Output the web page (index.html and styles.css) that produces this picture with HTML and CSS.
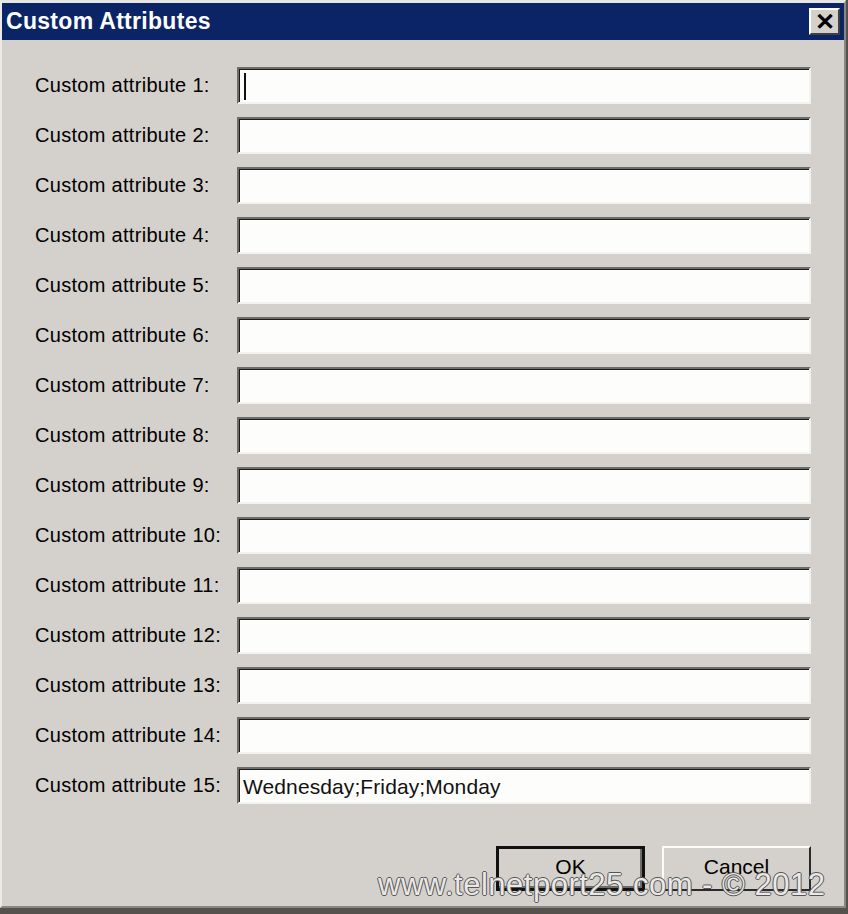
FILE: index.html
```html
<!DOCTYPE HTML>
<html>
<head>
<meta charset="utf-8" />
<title>Custom Attributes</title>
<link rel="stylesheet" href="styles.css">
</head>
<body>
<div class="window">
	<div class="titlebar">
		<span class="title">Custom Attributes</span>
		<span class="close">&#x2715;</span>
	</div>
	<div class="form">
		<label>Custom attribute 1:</label><div class="field"><span class="caret"></span></div>
		<label>Custom attribute 2:</label><div class="field"></div>
		<label>Custom attribute 3:</label><div class="field"></div>
		<label>Custom attribute 4:</label><div class="field"></div>
		<label>Custom attribute 5:</label><div class="field"></div>
		<label>Custom attribute 6:</label><div class="field"></div>
		<label>Custom attribute 7:</label><div class="field"></div>
		<label>Custom attribute 8:</label><div class="field"></div>
		<label>Custom attribute 9:</label><div class="field"></div>
		<label>Custom attribute 10:</label><div class="field"></div>
		<label>Custom attribute 11:</label><div class="field"></div>
		<label>Custom attribute 12:</label><div class="field"></div>
		<label>Custom attribute 13:</label><div class="field"></div>
		<label>Custom attribute 14:</label><div class="field"></div>
		<label>Custom attribute 15:</label><div class="field">Wednesday;Friday;Monday</div>
	</div>
	<div class="buttons">
		<div class="btn default">OK</div>
		<div class="btn">Cancel</div>
	</div>
	<div class="watermark">www.telnetport25.com - &copy; 2012</div>
</div>
</body>
</html>
```

FILE: styles.css
```css
html,body{margin:0;padding:0;}
body{
	width:848px;
	height:914px;
	overflow:hidden;
	background:#55524e;
	font-family:"Liberation Sans",Arial,sans-serif;
}
.window{
	position:relative;
	box-sizing:border-box;
	width:846px;
	height:908px;
	background:#d4d1cc;
	border-top:3px solid #e8e6e2;
	border-left:2px solid #eceae6;
	border-right:2px solid #8a8782;
	border-bottom:2px solid #8a8782;
}
.titlebar{
	height:37px;
	background:#0b2466;
	display:flex;
	align-items:center;
	justify-content:space-between;
	padding:0 4px 0 4px;
}
.title{
	color:#fff;
	font-weight:bold;
	font-size:23px;
	letter-spacing:0.3px;
}
.close{
	box-sizing:border-box;
	width:31px;
	height:27px;
	background:#d4d1cc;
	border-top:2px solid #fff;
	border-left:2px solid #fff;
	border-right:2px solid #404040;
	border-bottom:2px solid #404040;
	display:flex;
	align-items:center;
	justify-content:center;
	font-size:24px;
	font-weight:bold;
	color:#000;
	line-height:1;
}
.form{
	display:grid;
	grid-template-columns:202px 574px;
	row-gap:13px;
	padding:27px 0 0 33px;
	align-items:center;
}
label{
	font-size:20px;
	color:#000;
	letter-spacing:0.3px;
}
.field{
	box-sizing:border-box;
	height:37px;
	background:#fdfdfc;
	border-top:2px solid #6e6c69;
	border-left:2px solid #6e6c69;
	border-right:2px solid #f4f3f1;
	border-bottom:2px solid #f4f3f1;
	box-shadow:inset 1px 1px 0 #1c1c1c;
	font-size:21px;
	letter-spacing:0.1px;
	padding:2px 0 0 4px;
	display:flex;
	align-items:center;
	color:#111;
}
.caret{
	width:2px;
	height:27px;
	background:#111;
	margin-left:1px;
}
.buttons{
	display:flex;
	justify-content:flex-end;
	gap:17px;
	padding:42px 33px 0 0;
}
.btn{
	box-sizing:border-box;
	width:149px;
	height:45px;
	background:#d4d1cc;
	border-top:2px solid #fbfbfa;
	border-left:2px solid #fbfbfa;
	border-right:2px solid #2a2a2a;
	border-bottom:2px solid #2a2a2a;
	display:flex;
	align-items:center;
	justify-content:center;
	font-size:21px;
	color:#000;
	padding-bottom:4px;
}
.btn.default{
	border:3px solid #111;
	box-shadow:inset -2px -2px 0 #6e6c69;
}
.watermark{
	position:absolute;
	left:376px;
	top:864px;
	font-size:31px;
	color:#e9e8e6;
	letter-spacing:0.5px;
	text-shadow:-1px 0 #555,1px 0 #555,0 -1px #555,0 1px #555;
}
```
